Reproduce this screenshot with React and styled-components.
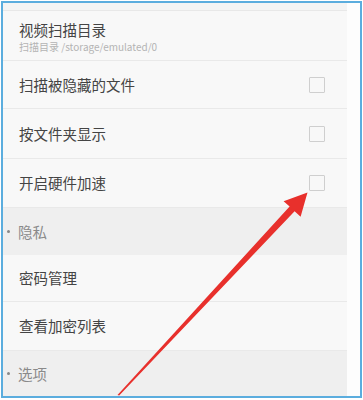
import React from 'react';
import styled, {createGlobalStyle} from 'styled-components';

const GlobalStyle = createGlobalStyle`
  html, body {
    margin: 0;
    padding: 0;
    background: #fff;
  }
  body {
    font-family: "Noto Sans CJK SC", "Noto Sans", sans-serif;
  }
`;

const rows = [
    {type: 'top', height: 8},
    {type: 'item', title: '视频扫描目录', sub: '扫描目录 /storage/emulated/0', height: 50},
    {type: 'item', title: '扫描被隐藏的文件', check: true, height: 48},
    {type: 'item', title: '按文件夹显示', check: true, height: 50},
    {type: 'item', title: '开启硬件加速', check: true, height: 49},
    {type: 'section', title: '隐私', height: 47},
    {type: 'item', title: '密码管理', height: 47},
    {type: 'item', title: '查看加密列表', height: 49},
    {type: 'section', title: '选项', height: 45},
];

const App = () => {
    return (
        <>
            <GlobalStyle/>
            <Frame>
                <Panel>
                    {rows.map((row, i) => {
                        if (row.type === 'top') return <TopStrip key={i} $h={row.height}/>;
                        if (row.type === 'section') {
                            return (
                                <Section key={i} $h={row.height}>
                                    <Dot/>
                                    <SectionTitle>{row.title}</SectionTitle>
                                </Section>
                            );
                        }
                        return (
                            <Item key={i} $h={row.height}>
                                <Texts>
                                    <Title $withSub={!!row.sub}>{row.title}</Title>
                                    {row.sub && <Sub>{row.sub}</Sub>}
                                </Texts>
                                {row.check && <CheckBox/>}
                            </Item>
                        );
                    })}
                </Panel>
                <Strip/>
                <Arrow viewBox="0 0 363 400" width="363" height="400">
                    <polygon
                        points="117.5,395 289.6,206.6 283.6,201.2 307.5,192.5 300.6,216.8 294.6,211.2 119.2,395.6"
                        fill="#e8302c"
                    />
                </Arrow>
            </Frame>
        </>
    );
};

const Frame = styled.div`
  box-sizing: border-box;
  width: 361px;
  height: 397px;
  margin: 1px 0 0 1px;
  border: 2px solid #5badde;
  display: flex;
  overflow: hidden;
`;

const Panel = styled.div`
  width: 344px;
  display: flex;
  flex-direction: column;
  background: #f7f7f7;
`;

const Strip = styled.div`
  flex: 1;
  background: #fdfdfd;
`;

const TopStrip = styled.div`
  height: ${p => p.$h}px;
  flex-shrink: 0;
  background: #f4f4f4;
  border-bottom: 1px solid #e8e8e8;
  box-sizing: border-box;
`;

const Item = styled.div`
  box-sizing: border-box;
  height: ${p => p.$h}px;
  flex-shrink: 0;
  display: flex;
  align-items: center;
  justify-content: space-between;
  padding: 0 22px 0 16px;
  background: #f8f8f8;
  border-bottom: 1px solid #e9e9e9;
`;

const Texts = styled.div`
  display: flex;
  flex-direction: column;
`;

const Title = styled.div`
  font-size: 14.5px;
  line-height: 18px;
  color: #444;
  margin-top: ${p => p.$withSub ? '2px' : '0'};
`;

const Sub = styled.div`
  font-size: 10px;
  line-height: 12px;
  margin-top: 2px;
  color: #b4b4b4;
`;

const CheckBox = styled.div`
  width: 14px;
  height: 14px;
  border: 1.5px solid #cfcfcf;
  border-radius: 1px;
`;

const Section = styled.div`
  box-sizing: border-box;
  height: ${p => p.$h}px;
  flex-shrink: 0;
  display: flex;
  align-items: center;
  padding-left: 4px;
  background: #efefef;
`;

const Dot = styled.span`
  width: 3px;
  height: 3px;
  border-radius: 50%;
  background: #888;
  margin-right: 8px;
`;

const SectionTitle = styled.span`
  font-size: 14.5px;
  color: #8a8a8a;
`;

const Arrow = styled.svg`
  position: absolute;
  left: 0;
  top: 0;
  pointer-events: none;
`;

export default App;
